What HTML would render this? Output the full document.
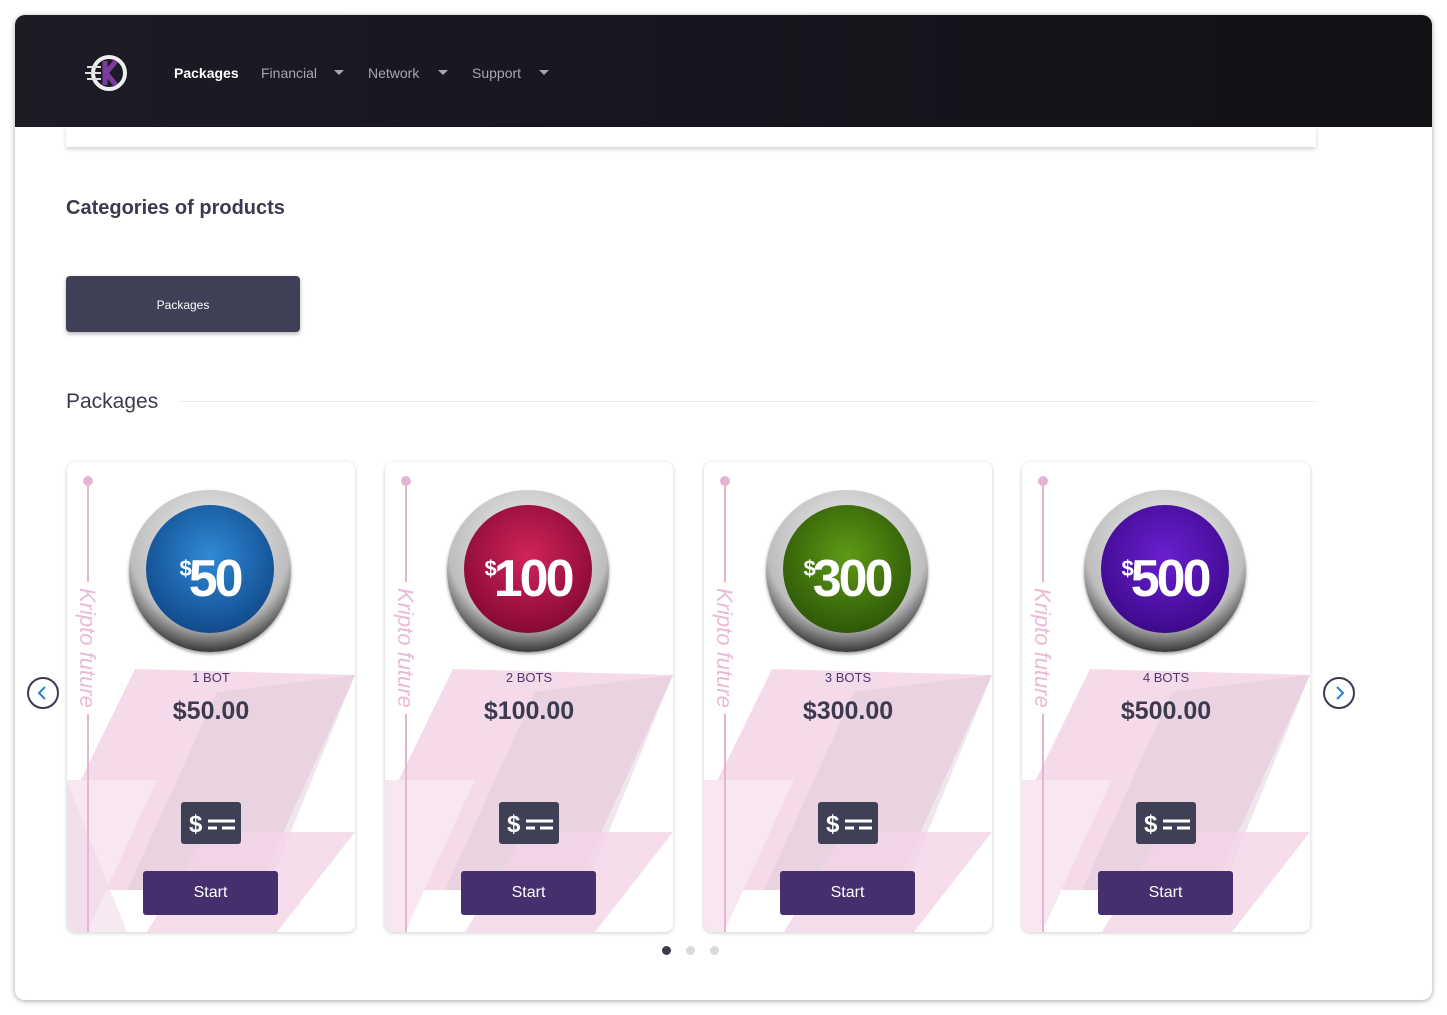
<!DOCTYPE html>
<html><head><meta charset="utf-8"><style>
body{margin:0;width:1447px;height:1015px;background:#fff;font-family:"Liberation Sans",sans-serif;position:relative;overflow:hidden}
.frame{position:absolute;left:15px;top:15px;width:1417px;height:985px;border-radius:10px;background:#fff;box-shadow:0 1px 6px rgba(0,0,0,.35);overflow:hidden}
.nav{position:absolute;left:0;top:0;width:1417px;height:112px;background:linear-gradient(90deg,#1c1b26,#111116)}
.nav span{position:absolute;top:50px;font-size:14px;color:#a7a7ae}
.caret{position:absolute;top:55px;width:0;height:0;border-left:5px solid transparent;border-right:5px solid transparent;border-top:5px solid #a7a7ae}
.strip{position:absolute;left:51px;top:112px;width:1250px;height:20px;background:#fff;box-shadow:0 2px 4px rgba(0,0,0,.18)}
h2{position:absolute;margin:0;font-weight:bold;font-size:20px;color:#3b3a4f}
.pk{position:absolute;left:51px;top:261px;width:234px;height:56px;border-radius:4px;background:#3f3f56;color:#fff;font-size:12px;text-align:center;line-height:58px;box-shadow:0 2px 4px rgba(0,0,0,.3)}
.card{position:absolute;top:447px;width:288px;height:470px;border-radius:8px;background:#fff;box-shadow:0 1px 4px rgba(0,0,0,.2);overflow:hidden}
.card svg.bg{position:absolute;left:0;top:0}
.coin{position:absolute;left:62px;top:28px;width:162px;height:162px;border-radius:50%;background:radial-gradient(circle at 50% 35%,#f4f4f4,#bdbdbd 60%,#333 80%,#ccc 95%);box-shadow:0 2px 3px rgba(0,0,0,.4)}
.coin div{position:absolute;left:17px;top:15px;width:128px;height:128px;border-radius:50%;color:#fff;font-size:52px;font-weight:bold;text-align:center;line-height:128px;letter-spacing:-3px}
.coin sup{font-size:22px;vertical-align:20px}
.bots{position:absolute;top:208px;width:288px;text-align:center;font-size:13px;color:#4a3a6e}
.price{position:absolute;top:235px;width:288px;text-align:center;font-size:25px;font-weight:bold;color:#3b3a4f}
.ic{position:absolute;left:114px;top:340px;width:60px;height:42px;border-radius:3px;background:#3f3f56}
.btn{position:absolute;left:76px;top:409px;width:135px;height:44px;border-radius:3px;background:#472f6d;color:#fff;font-size:16px;text-align:center;line-height:44px}
.vt{position:absolute;left:20px;top:20px;width:2px;height:450px;background:#e6b3d2}
.vtxt{position:absolute;top:120px;transform:rotate(90deg);transform-origin:left top;font-style:italic;font-size:22px;color:#eab9d6;background:#fff;padding:0 6px;left:33px;white-space:nowrap}
.arrow{position:absolute;top:662px;width:28px;height:28px;border:2px solid #3b3a4f;border-radius:50%}
.dot{position:absolute;top:931px;width:9px;height:9px;border-radius:50%;background:#d9d9d9}
</style></head><body>
<div class="frame">
<div class="nav">
<svg style="position:absolute;left:68px;top:36px" width="48" height="44" viewBox="0 0 48 44"><circle cx="26" cy="22" r="16" fill="none" stroke="#eee" stroke-width="4"/><path d="M22 10v24M23 22l10-12M23 22l10 12" stroke="#7b3d9a" stroke-width="5" fill="none"/><path d="M4 16h14M2 22h16M4 28h14" stroke="#ddd" stroke-width="2"/></svg>
<span style="left:159px;color:#fff;font-weight:bold">Packages</span>
<span style="left:246px">Financial</span><i class="caret" style="left:319px"></i>
<span style="left:353px">Network</span><i class="caret" style="left:423px"></i>
<span style="left:457px">Support</span><i class="caret" style="left:524px"></i>
</div>
<div class="strip"></div>
<h2 style="left:51px;top:182px">Categories of products</h2>
<div class="pk">Packages</div>
<h2 style="left:51px;top:375px;font-weight:normal;font-size:21px">Packages</h2>
<div style="position:absolute;left:163px;top:386px;width:1138px;height:1px;background:#ececf0"></div>

<div class="arrow" style="left:12px"><svg width="28" height="28"><path d="M16 8l-6 6 6 6" stroke="#2c7fd0" stroke-width="2" fill="none"/></svg></div>
<div class="arrow" style="left:1308px"><svg width="28" height="28"><path d="M12 8l6 6-6 6" stroke="#2c7fd0" stroke-width="2" fill="none"/></svg></div>

<div class="card" style="left:52px">
<svg class="bg" width="288" height="470"><polygon points="68,207 288,213 190,428 -40,428" fill="#f3d3e6" opacity=".85"/><polygon points="150,230 288,213 200,428 60,428" fill="#dcc9d6" opacity=".45"/><polygon points="0,318 90,318 20,470 0,470" fill="#f8e6f0"/><polygon points="140,370 288,370 210,470 80,470" fill="#f2d4e6" opacity=".8"/><polygon points="0,320 60,470 0,470" fill="#f0dbe7" opacity=".6"/></svg>
<div class="vt"></div><div style="position:absolute;left:16px;top:14px;width:10px;height:10px;border-radius:50%;background:#e6b3d2"></div>
<div class="vtxt">Kripto future</div>
<div class="coin"><div style="background:radial-gradient(circle at 50% 40%,#2f8ad6,#124c8e 75%,#0a2c5c)"><sup>$</sup>50</div></div>
<div class="bots">1 BOT</div><div class="price">$50.00</div>
<div class="ic"><svg width="60" height="42"><text x="8" y="30" fill="#fff" font-size="24" font-weight="bold" font-family="Liberation Sans">$</text><path d="M27 19h27M27 26h9M41 26h13" stroke="#fff" stroke-width="3"/></svg></div>
<div class="btn">Start</div>
</div>

<div class="card" style="left:370px">
<svg class="bg" width="288" height="470"><polygon points="68,207 288,213 190,428 -40,428" fill="#f3d3e6" opacity=".85"/><polygon points="150,230 288,213 200,428 60,428" fill="#dcc9d6" opacity=".45"/><polygon points="0,318 90,318 20,470 0,470" fill="#f8e6f0"/><polygon points="140,370 288,370 210,470 80,470" fill="#f2d4e6" opacity=".8"/></svg>
<div class="vt"></div><div style="position:absolute;left:16px;top:14px;width:10px;height:10px;border-radius:50%;background:#e6b3d2"></div>
<div class="vtxt">Kripto future</div>
<div class="coin"><div style="background:radial-gradient(circle at 50% 40%,#d0245a,#8a0a35 75%,#50041d)"><sup>$</sup>100</div></div>
<div class="bots">2 BOTS</div><div class="price">$100.00</div>
<div class="ic"><svg width="60" height="42"><text x="8" y="30" fill="#fff" font-size="24" font-weight="bold" font-family="Liberation Sans">$</text><path d="M27 19h27M27 26h9M41 26h13" stroke="#fff" stroke-width="3"/></svg></div>
<div class="btn">Start</div>
</div>

<div class="card" style="left:689px">
<svg class="bg" width="288" height="470"><polygon points="68,207 288,213 190,428 -40,428" fill="#f3d3e6" opacity=".85"/><polygon points="150,230 288,213 200,428 60,428" fill="#dcc9d6" opacity=".45"/><polygon points="0,318 90,318 20,470 0,470" fill="#f8e6f0"/><polygon points="140,370 288,370 210,470 80,470" fill="#f2d4e6" opacity=".8"/></svg>
<div class="vt"></div><div style="position:absolute;left:16px;top:14px;width:10px;height:10px;border-radius:50%;background:#e6b3d2"></div>
<div class="vtxt">Kripto future</div>
<div class="coin"><div style="background:radial-gradient(circle at 50% 40%,#5f9a16,#2f5a08 75%,#183304)"><sup>$</sup>300</div></div>
<div class="bots">3 BOTS</div><div class="price">$300.00</div>
<div class="ic"><svg width="60" height="42"><text x="8" y="30" fill="#fff" font-size="24" font-weight="bold" font-family="Liberation Sans">$</text><path d="M27 19h27M27 26h9M41 26h13" stroke="#fff" stroke-width="3"/></svg></div>
<div class="btn">Start</div>
</div>

<div class="card" style="left:1007px">
<svg class="bg" width="288" height="470"><polygon points="68,207 288,213 190,428 -40,428" fill="#f3d3e6" opacity=".85"/><polygon points="150,230 288,213 200,428 60,428" fill="#dcc9d6" opacity=".45"/><polygon points="0,318 90,318 20,470 0,470" fill="#f8e6f0"/><polygon points="140,370 288,370 210,470 80,470" fill="#f2d4e6" opacity=".8"/></svg>
<div class="vt"></div><div style="position:absolute;left:16px;top:14px;width:10px;height:10px;border-radius:50%;background:#e6b3d2"></div>
<div class="vtxt">Kripto future</div>
<div class="coin"><div style="background:radial-gradient(circle at 50% 40%,#6a1fd0,#3f0a8e 75%,#22045a)"><sup>$</sup>500</div></div>
<div class="bots">4 BOTS</div><div class="price">$500.00</div>
<div class="ic"><svg width="60" height="42"><text x="8" y="30" fill="#fff" font-size="24" font-weight="bold" font-family="Liberation Sans">$</text><path d="M27 19h27M27 26h9M41 26h13" stroke="#fff" stroke-width="3"/></svg></div>
<div class="btn">Start</div>
</div>

<div class="dot" style="left:647px;background:#3b3a4f"></div>
<div class="dot" style="left:671px"></div>
<div class="dot" style="left:695px"></div>
</div>
</body></html>
